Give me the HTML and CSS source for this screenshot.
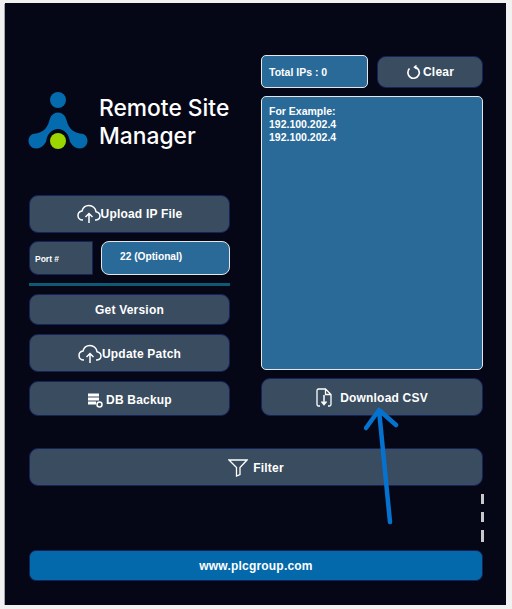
FILE: index.html
```html
<!DOCTYPE html>
<html>
<head>
    <meta charset="utf-8">
    <title>Remote Site Manager</title>
    <link rel="stylesheet" href="styles.css">
</head>
<body>
    <div class="window">
        <div class="columns">
            <div class="left">
                <div class="brand">
                    <svg class="logo" width="60" height="60" viewBox="0 0 60 60">
                        <circle cx="30" cy="8" r="8" fill="#046bae"/>
                        <path fill="#046bae" d="M30 20.5C35 20.5 37.5 24.5 38.5 28C40 34 43 40 52 41.5C57 41.5 59.5 45 59.5 49C59.5 53 56 56.5 52 56.5C46 56.5 43.5 52 42 50C41 42 36 37 30 37C24 37 19 42 18 50C16.5 52 14 56.5 8 56.5C4 56.5 .5 53 .5 49C.5 45 3 41.5 8 41.5C17 40 20 34 21.5 28C22.5 24.5 25 20.5 30 20.5Z"/>
                        <circle cx="30" cy="49" r="8" fill="#9bd600"/>
                    </svg>
                    <div class="brand-name">Remote Site<br>Manager</div>
                </div>

                <button class="btn tall">
                    <svg class="icon" width="24" height="20" viewBox="0 0 24 20"><path d="M6 16H5.500C3 16 1 14 1 11.500C1 9.200 2.800 7.300 5 7C5.800 3.800 8.600 1.500 12 1.500C15.600 1.500 18.600 4.200 19 7.700C21.200 8.200 23 9.800 23 12C23 14.200 21.500 15.600 19 16H18"/><path d="M12 19V10M8.500 13L12 9.500L15.500 13"/></svg>
                    Upload IP File
                </button>

                <div class="port-row">
                    <div class="port-label">Port #</div>
                    <div class="port-input">22 (Optional)</div>
                </div>
                <div class="separator"></div>

                <button class="btn short">Get Version</button>
                <button class="btn tall">
                    <svg class="icon" width="24" height="20" viewBox="0 0 24 20"><path d="M6 16H5.500C3 16 1 14 1 11.500C1 9.200 2.800 7.300 5 7C5.800 3.800 8.600 1.500 12 1.500C15.600 1.500 18.600 4.200 19 7.700C21.200 8.200 23 9.800 23 12C23 14.200 21.500 15.600 19 16H18"/><path d="M12 19V10M8.500 13L12 9.500L15.500 13"/></svg>
                    Update Patch
                </button>
                <button class="btn backup">
                    <svg width="16" height="16" viewBox="0 0 16 16"><path fill="#fff" d="M1 1.500H12V4.500H1ZM1 5.500H12V8.500H1ZM1 9.500H9V12.500H1Z"/><circle cx="12.500" cy="12.500" r="2.500" fill="none" stroke="#fff" stroke-width="1.500"/></svg>
                    DB Backup
                </button>
            </div>

            <div class="right">
                <div class="top-row">
                    <div class="total">Total IPs : 0</div>
                    <button class="btn clear">
                        <svg class="icon" width="15" height="15" viewBox="0 0 15 15"><path stroke-width="1.700" d="M3.500 3.500A5.700 5.700 0 1 0 9 2"/><path d="M10.500 .5L8.500 2.200L10.800 4"/></svg>
                        Clear
                    </button>
                </div>
                <div class="ip-box">For Example:<br>192.100.202.4<br>192.100.202.4</div>
                <button class="btn tall">
                    <svg class="icon" width="16" height="19" viewBox="0 0 16 19"><path stroke-width="1.300" d="M4 18H2.500A1.500 1.500 0 0 1 1 16.500V2.500A1.500 1.500 0 0 1 2.500 1H9.500L15 6.500V16.500A1.500 1.500 0 0 1 13.500 18H12M9.500 1V6.500H15"/><path d="M8 7V16M5.500 13.500L8 16.500L10.500 13.500"/></svg>
                    <span class="download-text">Download CSV</span>
                </button>
            </div>
        </div>

        <button class="btn tall filter">
            <svg class="icon" width="20" height="18" viewBox="0 0 20 18"><path stroke-width="1.300" d="M1 1H19L12 8.500V15.500L8.500 17V8.500Z"/></svg>
            Filter
        </button>

        <div class="dashes"><span></span><span></span><span></span></div>

        <div class="footer">www.plcgroup.com</div>

        <svg class="arrow" width="40" height="120" viewBox="0 0 40 120">
            <path d="M15 4L26 116M2 22L15 4L32 19"/>
        </svg>
    </div>
</body>
</html>
```

FILE: styles.css
```css
* {
    box-sizing: border-box;
}
body {
    margin: 0;
    background: #f1f1f2;
    font-family: "Liberation Sans", Arial, sans-serif;
    color: #fff;
}
.window {
    position: relative;
    width: 501px;
    height: 602px;
    margin: 3px 0 0 5px;
    padding: 52px 23px 0 24px;
    background: #060716;
    box-shadow: -1px 1px 0 #a5a5ad;
}
.columns {
    display: flex;
    gap: 31px;
}
.left {
    width: 201px;
    display: flex;
    flex-direction: column;
}
.right {
    width: 222px;
    display: flex;
    flex-direction: column;
}

.brand {
    display: flex;
    align-items: center;
    gap: 11px;
    margin: 37px 0 43px -1px;
    height: 60px;
}
.logo {
    flex-shrink: 0;
}
.brand-name {
    font-family: Inter, sans-serif;
    font-size: 22.800px;
    font-weight: 500;
    line-height: 28px;
    white-space: nowrap;
}

.btn {
    display: flex;
    align-items: center;
    justify-content: center;
    gap: 2px;
    width: 100%;
    padding: 1px 0 0;
    background: #3a4c60;
    border: 1px solid #16225a;
    border-radius: 9px;
    color: #fff;
    font-family: inherit;
    font-size: 12px;
    font-weight: bold;
    letter-spacing: .2px;
}
.tall { height: 38px; }
.short { height: 31px; margin-bottom: 9px; }
.left .tall { margin-bottom: 9px; gap: 0; }
.left .tall:first-of-type { margin-bottom: 8px; padding-top: 0; }
.backup { height: 35px; gap: 3px; padding-top: 2px; }
.filter { margin-top: 32px; gap: 5px; }
.icon {
    fill: none;
    stroke: #fff;
    stroke-width: 1.500;
}
.download-text { margin-left: 6px; }

.port-row {
    display: flex;
    gap: 8px;
    height: 34px;
}
.port-label {
    width: 64px;
    display: flex;
    align-items: center;
    padding: 1px 0 0 5px;
    background: #3a4c60;
    border: 1px solid #16225a;
    border-radius: 9px 0 0 9px;
    font-size: 8.500px;
    font-weight: bold;
}
.port-input {
    flex: 1;
    padding: 9px 0 0 18px;
    background: #2a6a99;
    border: 1px solid #e4e6e8;
    border-radius: 8px;
    font-size: 10.200px;
    font-weight: bold;
}
.separator {
    height: 3px;
    margin: 8px 0;
    background: #0e5a74;
}

.top-row {
    display: flex;
    gap: 9px;
    height: 33px;
}
.total {
    width: 107px;
    display: flex;
    align-items: center;
    padding-left: 7px;
    background: #2a6a99;
    border: 1px solid #e4e6e8;
    border-radius: 5px;
    font-size: 10.500px;
    font-weight: bold;
}
.clear {
    width: 106px;
    margin-top: 1px;
    height: 32px;
    padding-top: 0;
}
.ip-box {
    height: 274px;
    margin: 8px 0;
    padding: 8px 7px;
    background: #2a6a99;
    border: 1px solid #e4e6e8;
    border-radius: 5px;
    font-size: 10.500px;
    font-weight: bold;
    line-height: 13px;
}

.dashes {
    display: flex;
    flex-direction: column;
    align-items: flex-end;
    gap: 8px;
    height: 48px;
    margin: 8px -1px 8px 0;
}
.dashes span {
    width: 3px;
    height: 10px;
    background: #c8c8cc;
}
.dashes span:last-child {
    height: 12px;
}
.footer {
    height: 31px;
    display: flex;
    align-items: center;
    justify-content: center;
    padding-top: 1px;
    background: #0369ab;
    border: 1px solid #16225a;
    border-radius: 7px;
    font-size: 12px;
    font-weight: bold;
    letter-spacing: .2px;
}

.arrow {
    position: absolute;
    left: 359px;
    top: 403px;
}
.arrow path {
    fill: none;
    stroke: #0672cf;
    stroke-width: 4.500;
    stroke-linecap: round;
    stroke-linejoin: round;
}
```
